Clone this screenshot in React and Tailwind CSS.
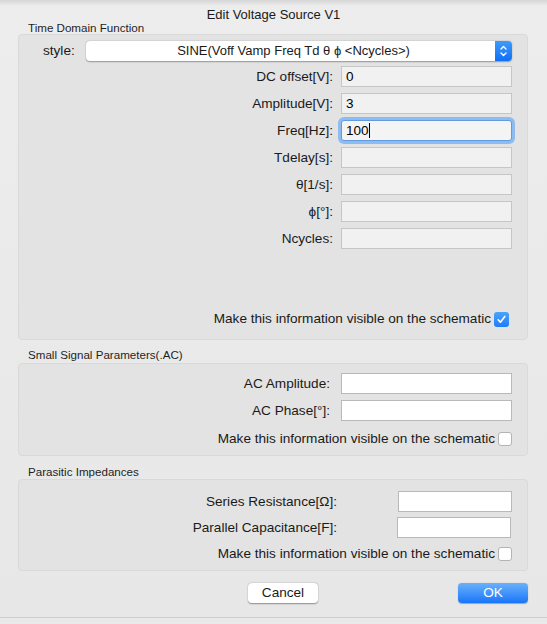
import React from 'react';

const font = { fontFamily: '"Liberation Sans", Arial, sans-serif' };

function Field({ value, focused, white, className = '' }) {
  if (focused) {
    return (
      <div className={`h-[21px] rounded-[3px] ring-[3px] ring-[#8fbcf0] border border-[#5f9be0] bg-[#f4f4f4] flex items-center pl-[4px] text-[13.5px] text-black ${className}`}>
        <span>{value}</span>
        <span className="w-[1px] h-[15px] bg-black" />
      </div>
    );
  }
  return (
    <div
      className={`h-[21px] border ${white ? 'bg-white border-[#b9b9b9]' : 'bg-[#f1f1f1] border-[#c6c6c6]'} flex items-center pl-[4px] text-[13.5px] text-black ${className}`}
    >
      {value}
    </div>
  );
}

function Row({ label, children, labelWidth = 'w-[314px]' }) {
  return (
    <div className="flex items-center pr-[15px]">
      <div className={`${labelWidth} text-right text-[13.6px] leading-[16px] text-[#1a1a1a] whitespace-nowrap`}>{label}</div>
      <div className="ml-auto flex">{children}</div>
    </div>
  );
}

function Check({ checked }) {
  if (checked) {
    return (
      <div className="w-[15px] h-[15px] rounded-[3px] bg-gradient-to-b from-[#4ba3fb] to-[#1f7cf7] flex items-center justify-center">
        <svg width="11" height="11" viewBox="0 0 11 11" fill="none">
          <path d="M2.2 5.8 L4.4 8.2 L8.8 2.4" stroke="white" strokeWidth="1.6" strokeLinecap="round" strokeLinejoin="round" />
        </svg>
      </div>
    );
  }
  return <div className="w-[14px] h-[14px] rounded-[3px] bg-white border border-[#b3b3b3]" />;
}

function VisibleRow({ checked, pr }) {
  return (
    <div className={`h-[14px] flex items-center justify-end ${pr}`}>
      <span className="text-[13.6px] leading-[14px] text-[#1a1a1a] mr-[3px] whitespace-nowrap">
        Make this information visible on the schematic
      </span>
      <Check checked={checked} />
    </div>
  );
}

function Box({ className = '', children }) {
  return (
    <div className={`ml-[18px] w-[510px] rounded-[4px] bg-[#e3e3e3] border border-[#d9d9d9] ${className}`}>
      {children}
    </div>
  );
}

function SectionLabel({ children, className = '' }) {
  return <div className={`pl-[28px] text-[11.6px] leading-[12px] text-[#1f1f1f] ${className}`}>{children}</div>;
}

export default function App() {
  const timeRows = [
    ['DC offset[V]:', '0'],
    ['Amplitude[V]:', '3'],
    ['Freq[Hz]:', '100', true],
    ['Tdelay[s]:', ''],
    ['θ[1/s]:', ''],
    ['ϕ[°]:', ''],
    ['Ncycles:', ''],
  ];

  return (
    <div className="w-[547px] h-[624px] bg-gradient-to-b from-[#ededed] to-[#e7e7e7] flex flex-col" style={font}>
      <div className="h-[6px] bg-gradient-to-b from-[#d6d6d6] to-[#ededed]" />
      <div className="h-[16px] pt-[2px] text-center text-[13px] leading-[14px] text-[#1a1a1a]">Edit Voltage Source V1</div>
      <SectionLabel className="h-[12px]">Time Domain Function</SectionLabel>

      <Box className="h-[306px] pt-[6px]">
        <div className="flex items-center pl-[24px] pr-[15px]">
          <span className="text-[13.6px] text-[#1a1a1a] w-[43px]">style:</span>
          <div className="flex-1 h-[20px] flex rounded-[4px] bg-white shadow-[0_0.5px_1.5px_rgba(0,0,0,0.35)]">
            <div className="flex-1 flex items-center justify-center text-[13px] text-[#1a1a1a] pl-[6px]">
              SINE(Voff Vamp Freq Td θ ϕ &lt;Ncycles&gt;)
            </div>
            <div className="w-[17px] h-[20px] rounded-r-[4px] bg-gradient-to-b from-[#3d9bfb] to-[#0f6ef8] flex items-center justify-center">
              <svg width="9" height="14" viewBox="0 0 9 14" fill="none">
                <path d="M2 5 L4.5 2.5 L7 5" stroke="white" strokeWidth="1.4" strokeLinecap="round" strokeLinejoin="round" />
                <path d="M2 9 L4.5 11.5 L7 9" stroke="white" strokeWidth="1.4" strokeLinecap="round" strokeLinejoin="round" />
              </svg>
            </div>
          </div>
        </div>

        <div className="mt-[5px] flex flex-col gap-[6px]">
          {timeRows.map(([label, value, focused]) => (
            <Row key={label} label={label}>
              <Field value={value} focused={focused} className="w-[171px]" />
            </Row>
          ))}
        </div>

        <div className="mt-[63px]">
          <VisibleRow checked pr="pr-[18px]" />
        </div>
      </Box>

      <SectionLabel className="h-[23px] pt-[9px]">Small Signal Parameters(.AC)</SectionLabel>

      <Box className="h-[93px] pt-[9px]">
        <div className="flex flex-col gap-[6px]">
          <Row label="AC Amplitude:" labelWidth="w-[311px]">
            <Field value="" white className="w-[171px]" />
          </Row>
          <Row label="AC Phase[°]:" labelWidth="w-[311px]">
            <Field value="" white className="w-[171px]" />
          </Row>
        </div>
        <div className="mt-[11px]">
          <VisibleRow pr="pr-[15px]" />
        </div>
      </Box>

      <SectionLabel className="h-[23px] pt-[10px]">Parasitic Impedances</SectionLabel>

      <Box className="h-[92px] pt-[11px]">
        <div className="flex flex-col gap-[5px]">
          <Row label="Series Resistance[Ω]:" labelWidth="w-[318px]">
            <Field value="" white className="w-[114px]" />
          </Row>
          <Row label="Parallel Capacitance[F]:" labelWidth="w-[318px]">
            <Field value="" white className="w-[114px] mr-[1px]" />
          </Row>
        </div>
        <div className="mt-[9px]">
          <VisibleRow pr="pr-[15px]" />
        </div>
      </Box>

      <div className="mt-[12px] flex items-center pl-[248px] pr-[19px]">
        <button className="w-[70px] h-[20px] rounded-[4px] bg-white text-[13.6px] text-[#1a1a1a] shadow-[0_0.5px_1.5px_rgba(0,0,0,0.4)]">
          Cancel
        </button>
        <button className="ml-auto w-[70px] h-[20px] rounded-[4px] bg-gradient-to-b from-[#69b1fb] to-[#1574f8] text-[13.6px] text-white shadow-[0_0.5px_1px_rgba(0,0,0,0.3)]">
          OK
        </button>
      </div>

      <div className="mt-auto h-[1px] bg-[#cdcdcd]" />
      <div className="h-[6px] bg-[#e9e9e9]" />
    </div>
  );
}
